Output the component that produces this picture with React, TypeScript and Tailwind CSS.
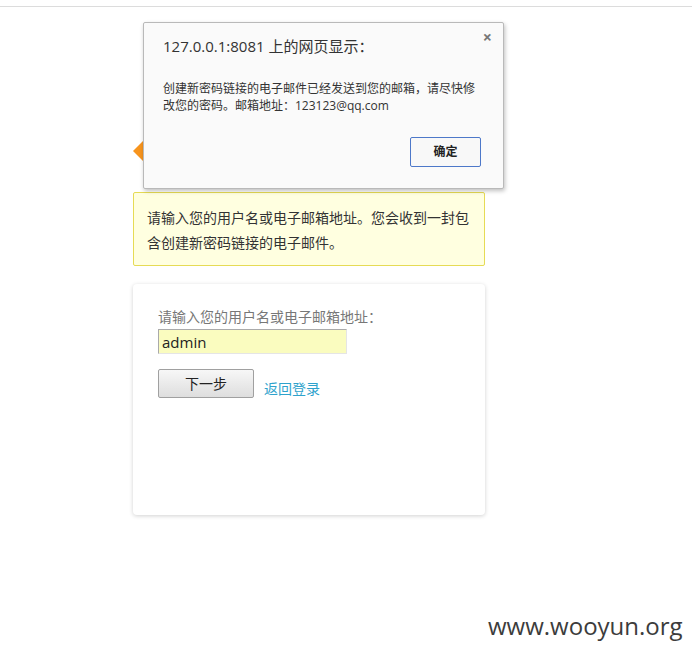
import { useState } from "react"

const cjk = `"Open Sans", "Noto Sans CJK SC", sans-serif`

function AlertDialog() {
  return (
    <div
      className="absolute left-[143px] top-[22px] w-[361px] h-[167px] bg-[#fafafa] border border-[#b9b9b9] rounded-[2px] shadow-[1px_2px_4px_rgba(0,0,0,0.25)] pl-[19px] pr-[20px] pt-[13px]"
      style={{ fontFamily: cjk }}
    >
      <span className="absolute right-[11px] top-[6px] text-[16px] font-bold text-[#777] leading-none">×</span>
      <h1 className="text-[15px] leading-[20px] text-[#333]">127.0.0.1:8081 上的网页显示：</h1>
      <p className="mt-[24px] text-[12px] leading-[17px] text-[#333]">
        创建新密码链接的电子邮件已经发送到您的邮箱，请尽快修改您的密码。邮箱地址：123123@qq.com
      </p>
      <div className="flex justify-end mt-[23px] mr-[2px]">
        <button className="w-[71px] h-[30px] border border-[#4d78c9] rounded-[2px] bg-[#f8f8f8] text-[12px] font-bold text-[#222]">
          确定
        </button>
      </div>
    </div>
  )
}

export default function App() {
  const [user, setUser] = useState("admin")

  return (
    <div className="relative w-[692px] h-[655px] bg-white overflow-hidden" style={{ fontFamily: cjk }}>
      <div className="h-[7px] border-b border-[#dcdcdc]" />

      <div className="ml-[133px] w-[352px] pt-[134px]">
        {/* logo remnant */}
        <div className="h-[19px]">
          <div className="w-0 h-0 border-y-[10px] border-y-transparent border-r-[10px] border-r-[#f7941d]" />
        </div>

        {/* message */}
        <div className="mt-[32px] bg-[#ffffe0] border border-[#e6db55] rounded-[2px] pl-[13px] pr-[12px] pt-[12px] pb-[10px] text-[14px] leading-[25px] text-[#333]">
          请输入您的用户名或电子邮箱地址。您会收到一封包含创建新密码链接的电子邮件。
        </div>

        {/* form */}
        <form className="mt-[18px] h-[231px] bg-white rounded-[4px] shadow-[0_1px_4px_rgba(0,0,0,0.18)] pl-[25px] pt-[23px]">
          <label className="block text-[14px] leading-[20px] text-[#777]">请输入您的用户名或电子邮箱地址：</label>
          <input
            value={user}
            onChange={(e) => setUser(e.target.value)}
            className="mt-[2px] block w-[189px] h-[25px] bg-[#fafcbf] border border-[#aaa] border-b-[#e5e5e5] border-r-[#e5e5e5] px-[3px] text-[15px] text-[#222] outline-none"
          />
          <div className="mt-[15px] flex items-end gap-[10px]">
            <button
              type="button"
              className="w-[96px] h-[29px] border border-[#a0a0a0] rounded-[2px] bg-gradient-to-b from-[#f7f7f7] to-[#dedede] text-[14px] text-[#222]"
            >
              下一步
            </button>
            <a href="#" className="text-[14px] leading-[20px] -mb-[1px] text-[#2ea2cc]">返回登录</a>
          </div>
        </form>
      </div>

      <AlertDialog />

      <div className="absolute left-[488px] top-[609px] text-[24px] leading-[34px] text-[#3c3c3c]" style={{ fontFamily: `"Open Sans", sans-serif` }}>
        www.wooyun.org
      </div>
    </div>
  )
}
